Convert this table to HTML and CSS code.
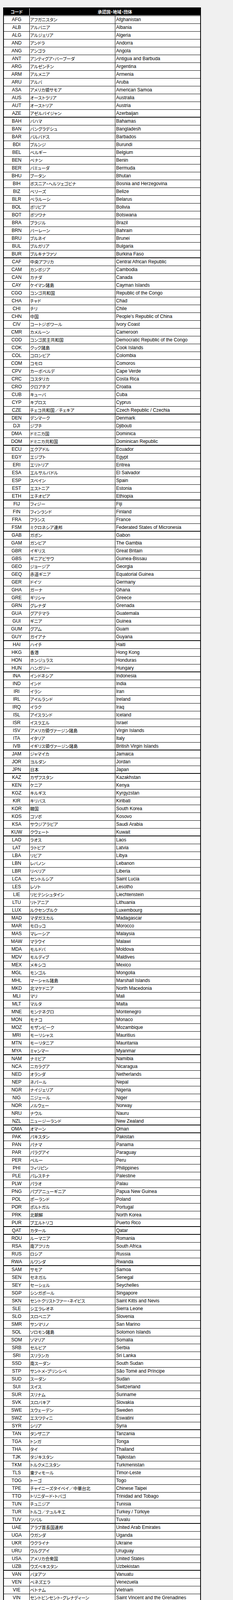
FILE: index.html
```html
<!DOCTYPE html>
<html lang="ja">
<head>
<meta charset="utf-8">
<title>コード一覧</title>
<link rel="stylesheet" href="styles.css">
</head>
<body>
<div class="tbl">
  <div class="hd"><span class="hc">コード</span><span class="hn">承認国・地域・団体</span></div>
  <div class="grp">
    <div class="r"><span class="c">AFG</span><span class="j">アフガニスタン</span><span class="e">Afghanistan</span></div>
    <div class="r"><span class="c">ALB</span><span class="j">アルバニア</span><span class="e">Albania</span></div>
    <div class="r"><span class="c">ALG</span><span class="j">アルジェリア</span><span class="e">Algeria</span></div>
    <div class="r"><span class="c">AND</span><span class="j">アンドラ</span><span class="e">Andorra</span></div>
    <div class="r"><span class="c">ANG</span><span class="j">アンゴラ</span><span class="e">Angola</span></div>
    <div class="r"><span class="c">ANT</span><span class="j">アンティグア・バーブーダ</span><span class="e">Antigua and Barbuda</span></div>
    <div class="r"><span class="c">ARG</span><span class="j">アルゼンチン</span><span class="e">Argentina</span></div>
    <div class="r"><span class="c">ARM</span><span class="j">アルメニア</span><span class="e">Armenia</span></div>
    <div class="r"><span class="c">ARU</span><span class="j">アルバ</span><span class="e">Aruba</span></div>
    <div class="r"><span class="c">ASA</span><span class="j">アメリカ領サモア</span><span class="e">American Samoa</span></div>
    <div class="r"><span class="c">AUS</span><span class="j">オーストラリア</span><span class="e">Australia</span></div>
    <div class="r"><span class="c">AUT</span><span class="j">オーストリア</span><span class="e">Austria</span></div>
    <div class="r"><span class="c">AZE</span><span class="j">アゼルバイジャン</span><span class="e">Azerbaijan</span></div>
  </div>
  <div class="grp">
    <div class="r"><span class="c">BAH</span><span class="j">バハマ</span><span class="e">Bahamas</span></div>
    <div class="r"><span class="c">BAN</span><span class="j">バングラデシュ</span><span class="e">Bangladesh</span></div>
    <div class="r"><span class="c">BAR</span><span class="j">バルバドス</span><span class="e">Barbados</span></div>
    <div class="r"><span class="c">BDI</span><span class="j">ブルンジ</span><span class="e">Burundi</span></div>
    <div class="r"><span class="c">BEL</span><span class="j">ベルギー</span><span class="e">Belgium</span></div>
    <div class="r"><span class="c">BEN</span><span class="j">ベナン</span><span class="e">Benin</span></div>
    <div class="r"><span class="c">BER</span><span class="j">バミューダ</span><span class="e">Bermuda</span></div>
    <div class="r"><span class="c">BHU</span><span class="j">ブータン</span><span class="e">Bhutan</span></div>
    <div class="r"><span class="c">BIH</span><span class="j">ボスニア・ヘルツェゴビナ</span><span class="e">Bosnia and Herzegovina</span></div>
    <div class="r"><span class="c">BIZ</span><span class="j">ベリーズ</span><span class="e">Belize</span></div>
    <div class="r"><span class="c">BLR</span><span class="j">ベラルーシ</span><span class="e">Belarus</span></div>
    <div class="r"><span class="c">BOL</span><span class="j">ボリビア</span><span class="e">Bolivia</span></div>
    <div class="r"><span class="c">BOT</span><span class="j">ボツワナ</span><span class="e">Botswana</span></div>
    <div class="r"><span class="c">BRA</span><span class="j">ブラジル</span><span class="e">Brazil</span></div>
    <div class="r"><span class="c">BRN</span><span class="j">バーレーン</span><span class="e">Bahrain</span></div>
    <div class="r"><span class="c">BRU</span><span class="j">ブルネイ</span><span class="e">Brunei</span></div>
    <div class="r"><span class="c">BUL</span><span class="j">ブルガリア</span><span class="e">Bulgaria</span></div>
    <div class="r"><span class="c">BUR</span><span class="j">ブルキナファソ</span><span class="e">Burkina Faso</span></div>
  </div>
  <div class="grp">
    <div class="r"><span class="c">CAF</span><span class="j">中央アフリカ</span><span class="e">Central African Republic</span></div>
    <div class="r"><span class="c">CAM</span><span class="j">カンボジア</span><span class="e">Cambodia</span></div>
    <div class="r"><span class="c">CAN</span><span class="j">カナダ</span><span class="e">Canada</span></div>
    <div class="r"><span class="c">CAY</span><span class="j">ケイマン諸島</span><span class="e">Cayman Islands</span></div>
    <div class="r"><span class="c">CGO</span><span class="j">コンゴ共和国</span><span class="e">Republic of the Congo</span></div>
    <div class="r"><span class="c">CHA</span><span class="j">チャド</span><span class="e">Chad</span></div>
    <div class="r"><span class="c">CHI</span><span class="j">チリ</span><span class="e">Chile</span></div>
    <div class="r"><span class="c">CHN</span><span class="j">中国</span><span class="e">People's Republic of China</span></div>
    <div class="r"><span class="c">CIV</span><span class="j">コートジボワール</span><span class="e">Ivory Coast</span></div>
    <div class="r"><span class="c">CMR</span><span class="j">カメルーン</span><span class="e">Cameroon</span></div>
    <div class="r"><span class="c">COD</span><span class="j">コンゴ民主共和国</span><span class="e">Democratic Republic of the Congo</span></div>
    <div class="r"><span class="c">COK</span><span class="j">クック諸島</span><span class="e">Cook Islands</span></div>
    <div class="r"><span class="c">COL</span><span class="j">コロンビア</span><span class="e">Colombia</span></div>
    <div class="r"><span class="c">COM</span><span class="j">コモロ</span><span class="e">Comoros</span></div>
    <div class="r"><span class="c">CPV</span><span class="j">カーボベルデ</span><span class="e">Cape Verde</span></div>
    <div class="r"><span class="c">CRC</span><span class="j">コスタリカ</span><span class="e">Costa Rica</span></div>
    <div class="r"><span class="c">CRO</span><span class="j">クロアチア</span><span class="e">Croatia</span></div>
    <div class="r"><span class="c">CUB</span><span class="j">キューバ</span><span class="e">Cuba</span></div>
    <div class="r"><span class="c">CYP</span><span class="j">キプロス</span><span class="e">Cyprus</span></div>
    <div class="r"><span class="c">CZE</span><span class="j">チェコ共和国／チェキア</span><span class="e">Czech Republic / Czechia</span></div>
  </div>
  <div class="grp">
    <div class="r"><span class="c">DEN</span><span class="j">デンマーク</span><span class="e">Denmark</span></div>
    <div class="r"><span class="c">DJI</span><span class="j">ジブチ</span><span class="e">Djibouti</span></div>
    <div class="r"><span class="c">DMA</span><span class="j">ドミニカ国</span><span class="e">Dominica</span></div>
    <div class="r"><span class="c">DOM</span><span class="j">ドミニカ共和国</span><span class="e">Dominican Republic</span></div>
  </div>
  <div class="grp">
    <div class="r"><span class="c">ECU</span><span class="j">エクアドル</span><span class="e">Ecuador</span></div>
    <div class="r"><span class="c">EGY</span><span class="j">エジプト</span><span class="e">Egypt</span></div>
    <div class="r"><span class="c">ERI</span><span class="j">エリトリア</span><span class="e">Eritrea</span></div>
    <div class="r"><span class="c">ESA</span><span class="j">エルサルバドル</span><span class="e">El Salvador</span></div>
    <div class="r"><span class="c">ESP</span><span class="j">スペイン</span><span class="e">Spain</span></div>
    <div class="r"><span class="c">EST</span><span class="j">エストニア</span><span class="e">Estonia</span></div>
    <div class="r"><span class="c">ETH</span><span class="j">エチオピア</span><span class="e">Ethiopia</span></div>
  </div>
  <div class="grp">
    <div class="r"><span class="c">FIJ</span><span class="j">フィジー</span><span class="e">Fiji</span></div>
    <div class="r"><span class="c">FIN</span><span class="j">フィンランド</span><span class="e">Finland</span></div>
    <div class="r"><span class="c">FRA</span><span class="j">フランス</span><span class="e">France</span></div>
    <div class="r"><span class="c">FSM</span><span class="j">ミクロネシア連邦</span><span class="e">Federated States of Micronesia</span></div>
  </div>
  <div class="grp">
    <div class="r"><span class="c">GAB</span><span class="j">ガボン</span><span class="e">Gabon</span></div>
    <div class="r"><span class="c">GAM</span><span class="j">ガンビア</span><span class="e">The Gambia</span></div>
    <div class="r"><span class="c">GBR</span><span class="j">イギリス</span><span class="e">Great Britain</span></div>
    <div class="r"><span class="c">GBS</span><span class="j">ギニアビサウ</span><span class="e">Guinea-Bissau</span></div>
    <div class="r"><span class="c">GEO</span><span class="j">ジョージア</span><span class="e">Georgia</span></div>
    <div class="r"><span class="c">GEQ</span><span class="j">赤道ギニア</span><span class="e">Equatorial Guinea</span></div>
    <div class="r"><span class="c">GER</span><span class="j">ドイツ</span><span class="e">Germany</span></div>
    <div class="r"><span class="c">GHA</span><span class="j">ガーナ</span><span class="e">Ghana</span></div>
    <div class="r"><span class="c">GRE</span><span class="j">ギリシャ</span><span class="e">Greece</span></div>
    <div class="r"><span class="c">GRN</span><span class="j">グレナダ</span><span class="e">Grenada</span></div>
    <div class="r"><span class="c">GUA</span><span class="j">グアテマラ</span><span class="e">Guatemala</span></div>
    <div class="r"><span class="c">GUI</span><span class="j">ギニア</span><span class="e">Guinea</span></div>
    <div class="r"><span class="c">GUM</span><span class="j">グアム</span><span class="e">Guam</span></div>
    <div class="r"><span class="c">GUY</span><span class="j">ガイアナ</span><span class="e">Guyana</span></div>
  </div>
  <div class="grp">
    <div class="r"><span class="c">HAI</span><span class="j">ハイチ</span><span class="e">Haiti</span></div>
    <div class="r"><span class="c">HKG</span><span class="j">香港</span><span class="e">Hong Kong</span></div>
    <div class="r"><span class="c">HON</span><span class="j">ホンジュラス</span><span class="e">Honduras</span></div>
    <div class="r"><span class="c">HUN</span><span class="j">ハンガリー</span><span class="e">Hungary</span></div>
  </div>
  <div class="grp">
    <div class="r"><span class="c">INA</span><span class="j">インドネシア</span><span class="e">Indonesia</span></div>
    <div class="r"><span class="c">IND</span><span class="j">インド</span><span class="e">India</span></div>
    <div class="r"><span class="c">IRI</span><span class="j">イラン</span><span class="e">Iran</span></div>
    <div class="r"><span class="c">IRL</span><span class="j">アイルランド</span><span class="e">Ireland</span></div>
    <div class="r"><span class="c">IRQ</span><span class="j">イラク</span><span class="e">Iraq</span></div>
    <div class="r"><span class="c">ISL</span><span class="j">アイスランド</span><span class="e">Iceland</span></div>
    <div class="r"><span class="c">ISR</span><span class="j">イスラエル</span><span class="e">Israel</span></div>
    <div class="r"><span class="c">ISV</span><span class="j">アメリカ領ヴァージン諸島</span><span class="e">Virgin Islands</span></div>
    <div class="r"><span class="c">ITA</span><span class="j">イタリア</span><span class="e">Italy</span></div>
    <div class="r"><span class="c">IVB</span><span class="j">イギリス領ヴァージン諸島</span><span class="e">British Virgin Islands</span></div>
  </div>
  <div class="grp">
    <div class="r"><span class="c">JAM</span><span class="j">ジャマイカ</span><span class="e">Jamaica</span></div>
    <div class="r"><span class="c">JOR</span><span class="j">ヨルダン</span><span class="e">Jordan</span></div>
    <div class="r"><span class="c">JPN</span><span class="j">日本</span><span class="e">Japan</span></div>
  </div>
  <div class="grp">
    <div class="r"><span class="c">KAZ</span><span class="j">カザフスタン</span><span class="e">Kazakhstan</span></div>
    <div class="r"><span class="c">KEN</span><span class="j">ケニア</span><span class="e">Kenya</span></div>
    <div class="r"><span class="c">KGZ</span><span class="j">キルギス</span><span class="e">Kyrgyzstan</span></div>
    <div class="r"><span class="c">KIR</span><span class="j">キリバス</span><span class="e">Kiribati</span></div>
    <div class="r"><span class="c">KOR</span><span class="j">韓国</span><span class="e">South Korea</span></div>
    <div class="r"><span class="c">KOS</span><span class="j">コソボ</span><span class="e">Kosovo</span></div>
    <div class="r"><span class="c">KSA</span><span class="j">サウジアラビア</span><span class="e">Saudi Arabia</span></div>
    <div class="r"><span class="c">KUW</span><span class="j">クウェート</span><span class="e">Kuwait</span></div>
  </div>
  <div class="grp">
    <div class="r"><span class="c">LAO</span><span class="j">ラオス</span><span class="e">Laos</span></div>
    <div class="r"><span class="c">LAT</span><span class="j">ラトビア</span><span class="e">Latvia</span></div>
    <div class="r"><span class="c">LBA</span><span class="j">リビア</span><span class="e">Libya</span></div>
    <div class="r"><span class="c">LBN</span><span class="j">レバノン</span><span class="e">Lebanon</span></div>
    <div class="r"><span class="c">LBR</span><span class="j">リベリア</span><span class="e">Liberia</span></div>
    <div class="r"><span class="c">LCA</span><span class="j">セントルシア</span><span class="e">Saint Lucia</span></div>
    <div class="r"><span class="c">LES</span><span class="j">レソト</span><span class="e">Lesotho</span></div>
    <div class="r"><span class="c">LIE</span><span class="j">リヒテンシュタイン</span><span class="e">Liechtenstein</span></div>
    <div class="r"><span class="c">LTU</span><span class="j">リトアニア</span><span class="e">Lithuania</span></div>
    <div class="r"><span class="c">LUX</span><span class="j">ルクセンブルク</span><span class="e">Luxembourg</span></div>
  </div>
  <div class="grp">
    <div class="r"><span class="c">MAD</span><span class="j">マダガスカル</span><span class="e">Madagascar</span></div>
    <div class="r"><span class="c">MAR</span><span class="j">モロッコ</span><span class="e">Morocco</span></div>
    <div class="r"><span class="c">MAS</span><span class="j">マレーシア</span><span class="e">Malaysia</span></div>
    <div class="r"><span class="c">MAW</span><span class="j">マラウイ</span><span class="e">Malawi</span></div>
    <div class="r"><span class="c">MDA</span><span class="j">モルドバ</span><span class="e">Moldova</span></div>
    <div class="r"><span class="c">MDV</span><span class="j">モルディブ</span><span class="e">Maldives</span></div>
    <div class="r"><span class="c">MEX</span><span class="j">メキシコ</span><span class="e">Mexico</span></div>
    <div class="r"><span class="c">MGL</span><span class="j">モンゴル</span><span class="e">Mongolia</span></div>
    <div class="r"><span class="c">MHL</span><span class="j">マーシャル諸島</span><span class="e">Marshall Islands</span></div>
    <div class="r"><span class="c">MKD</span><span class="j">北マケドニア</span><span class="e">North Macedonia</span></div>
    <div class="r"><span class="c">MLI</span><span class="j">マリ</span><span class="e">Mali</span></div>
    <div class="r"><span class="c">MLT</span><span class="j">マルタ</span><span class="e">Malta</span></div>
    <div class="r"><span class="c">MNE</span><span class="j">モンテネグロ</span><span class="e">Montenegro</span></div>
    <div class="r"><span class="c">MON</span><span class="j">モナコ</span><span class="e">Monaco</span></div>
    <div class="r"><span class="c">MOZ</span><span class="j">モザンビーク</span><span class="e">Mozambique</span></div>
    <div class="r"><span class="c">MRI</span><span class="j">モーリシャス</span><span class="e">Mauritius</span></div>
    <div class="r"><span class="c">MTN</span><span class="j">モーリタニア</span><span class="e">Mauritania</span></div>
    <div class="r"><span class="c">MYA</span><span class="j">ミャンマー</span><span class="e">Myanmar</span></div>
  </div>
  <div class="grp">
    <div class="r"><span class="c">NAM</span><span class="j">ナミビア</span><span class="e">Namibia</span></div>
    <div class="r"><span class="c">NCA</span><span class="j">ニカラグア</span><span class="e">Nicaragua</span></div>
    <div class="r"><span class="c">NED</span><span class="j">オランダ</span><span class="e">Netherlands</span></div>
    <div class="r"><span class="c">NEP</span><span class="j">ネパール</span><span class="e">Nepal</span></div>
    <div class="r"><span class="c">NGR</span><span class="j">ナイジェリア</span><span class="e">Nigeria</span></div>
    <div class="r"><span class="c">NIG</span><span class="j">ニジェール</span><span class="e">Niger</span></div>
    <div class="r"><span class="c">NOR</span><span class="j">ノルウェー</span><span class="e">Norway</span></div>
    <div class="r"><span class="c">NRU</span><span class="j">ナウル</span><span class="e">Nauru</span></div>
    <div class="r"><span class="c">NZL</span><span class="j">ニュージーランド</span><span class="e">New Zealand</span></div>
  </div>
  <div class="grp">
    <div class="r"><span class="c">OMA</span><span class="j">オマーン</span><span class="e">Oman</span></div>
  </div>
  <div class="grp">
    <div class="r"><span class="c">PAK</span><span class="j">パキスタン</span><span class="e">Pakistan</span></div>
    <div class="r"><span class="c">PAN</span><span class="j">パナマ</span><span class="e">Panama</span></div>
    <div class="r"><span class="c">PAR</span><span class="j">パラグアイ</span><span class="e">Paraguay</span></div>
    <div class="r"><span class="c">PER</span><span class="j">ペルー</span><span class="e">Peru</span></div>
    <div class="r"><span class="c">PHI</span><span class="j">フィリピン</span><span class="e">Philippines</span></div>
    <div class="r"><span class="c">PLE</span><span class="j">パレスチナ</span><span class="e">Palestine</span></div>
    <div class="r"><span class="c">PLW</span><span class="j">パラオ</span><span class="e">Palau</span></div>
    <div class="r"><span class="c">PNG</span><span class="j">パプアニューギニア</span><span class="e">Papua New Guinea</span></div>
    <div class="r"><span class="c">POL</span><span class="j">ポーランド</span><span class="e">Poland</span></div>
    <div class="r"><span class="c">POR</span><span class="j">ポルトガル</span><span class="e">Portugal</span></div>
    <div class="r"><span class="c">PRK</span><span class="j">北朝鮮</span><span class="e">North Korea</span></div>
    <div class="r"><span class="c">PUR</span><span class="j">プエルトリコ</span><span class="e">Puerto Rico</span></div>
  </div>
  <div class="grp">
    <div class="r"><span class="c">QAT</span><span class="j">カタール</span><span class="e">Qatar</span></div>
  </div>
  <div class="grp">
    <div class="r"><span class="c">ROU</span><span class="j">ルーマニア</span><span class="e">Romania</span></div>
    <div class="r"><span class="c">RSA</span><span class="j">南アフリカ</span><span class="e">South Africa</span></div>
    <div class="r"><span class="c">RUS</span><span class="j">ロシア</span><span class="e">Russia</span></div>
    <div class="r"><span class="c">RWA</span><span class="j">ルワンダ</span><span class="e">Rwanda</span></div>
  </div>
  <div class="grp">
    <div class="r"><span class="c">SAM</span><span class="j">サモア</span><span class="e">Samoa</span></div>
    <div class="r"><span class="c">SEN</span><span class="j">セネガル</span><span class="e">Senegal</span></div>
    <div class="r"><span class="c">SEY</span><span class="j">セーシェル</span><span class="e">Seychelles</span></div>
    <div class="r"><span class="c">SGP</span><span class="j">シンガポール</span><span class="e">Singapore</span></div>
    <div class="r"><span class="c">SKN</span><span class="j">セントクリストファー・ネイビス</span><span class="e">Saint Kitts and Nevis</span></div>
    <div class="r"><span class="c">SLE</span><span class="j">シエラレオネ</span><span class="e">Sierra Leone</span></div>
    <div class="r"><span class="c">SLO</span><span class="j">スロベニア</span><span class="e">Slovenia</span></div>
    <div class="r"><span class="c">SMR</span><span class="j">サンマリノ</span><span class="e">San Marino</span></div>
    <div class="r"><span class="c">SOL</span><span class="j">ソロモン諸島</span><span class="e">Solomon Islands</span></div>
    <div class="r"><span class="c">SOM</span><span class="j">ソマリア</span><span class="e">Somalia</span></div>
    <div class="r"><span class="c">SRB</span><span class="j">セルビア</span><span class="e">Serbia</span></div>
    <div class="r"><span class="c">SRI</span><span class="j">スリランカ</span><span class="e">Sri Lanka</span></div>
    <div class="r"><span class="c">SSD</span><span class="j">南スーダン</span><span class="e">South Sudan</span></div>
    <div class="r"><span class="c">STP</span><span class="j">サントメ・プリンシペ</span><span class="e">São Tomé and Príncipe</span></div>
    <div class="r"><span class="c">SUD</span><span class="j">スーダン</span><span class="e">Sudan</span></div>
    <div class="r"><span class="c">SUI</span><span class="j">スイス</span><span class="e">Switzerland</span></div>
    <div class="r"><span class="c">SUR</span><span class="j">スリナム</span><span class="e">Suriname</span></div>
    <div class="r"><span class="c">SVK</span><span class="j">スロバキア</span><span class="e">Slovakia</span></div>
    <div class="r"><span class="c">SWE</span><span class="j">スウェーデン</span><span class="e">Sweden</span></div>
    <div class="r"><span class="c">SWZ</span><span class="j">エスワティニ</span><span class="e">Eswatini</span></div>
    <div class="r"><span class="c">SYR</span><span class="j">シリア</span><span class="e">Syria</span></div>
  </div>
  <div class="grp">
    <div class="r"><span class="c">TAN</span><span class="j">タンザニア</span><span class="e">Tanzania</span></div>
    <div class="r"><span class="c">TGA</span><span class="j">トンガ</span><span class="e">Tonga</span></div>
    <div class="r"><span class="c">THA</span><span class="j">タイ</span><span class="e">Thailand</span></div>
    <div class="r"><span class="c">TJK</span><span class="j">タジキスタン</span><span class="e">Tajikistan</span></div>
    <div class="r"><span class="c">TKM</span><span class="j">トルクメニスタン</span><span class="e">Turkmenistan</span></div>
    <div class="r"><span class="c">TLS</span><span class="j">東ティモール</span><span class="e">Timor-Leste</span></div>
    <div class="r"><span class="c">TOG</span><span class="j">トーゴ</span><span class="e">Togo</span></div>
    <div class="r"><span class="c">TPE</span><span class="j">チャイニーズタイペイ／中華台北</span><span class="e">Chinese Taipei</span></div>
    <div class="r"><span class="c">TTO</span><span class="j">トリニダード・トバゴ</span><span class="e">Trinidad and Tobago</span></div>
    <div class="r"><span class="c">TUN</span><span class="j">チュニジア</span><span class="e">Tunisia</span></div>
    <div class="r"><span class="c">TUR</span><span class="j">トルコ／テュルキエ</span><span class="e">Turkey / Türkiye</span></div>
    <div class="r"><span class="c">TUV</span><span class="j">ツバル</span><span class="e">Tuvalu</span></div>
  </div>
  <div class="grp">
    <div class="r"><span class="c">UAE</span><span class="j">アラブ首長国連邦</span><span class="e">United Arab Emirates</span></div>
    <div class="r"><span class="c">UGA</span><span class="j">ウガンダ</span><span class="e">Uganda</span></div>
    <div class="r"><span class="c">UKR</span><span class="j">ウクライナ</span><span class="e">Ukraine</span></div>
    <div class="r"><span class="c">URU</span><span class="j">ウルグアイ</span><span class="e">Uruguay</span></div>
    <div class="r"><span class="c">USA</span><span class="j">アメリカ合衆国</span><span class="e">United States</span></div>
    <div class="r"><span class="c">UZB</span><span class="j">ウズベキスタン</span><span class="e">Uzbekistan</span></div>
  </div>
  <div class="grp">
    <div class="r"><span class="c">VAN</span><span class="j">バヌアツ</span><span class="e">Vanuatu</span></div>
    <div class="r"><span class="c">VEN</span><span class="j">ベネズエラ</span><span class="e">Venezuela</span></div>
    <div class="r"><span class="c">VIE</span><span class="j">ベトナム</span><span class="e">Vietnam</span></div>
    <div class="r"><span class="c">VIN</span><span class="j">セントビンセント・グレナディーン</span><span class="e">Saint Vincent and the Grenadines</span></div>
  </div>
  <div class="grp">
    <div class="r"><span class="c">YEM</span><span class="j">イエメン</span><span class="e">Yemen</span></div>
  </div>
  <div class="grp">
    <div class="r"><span class="c">ZAM</span><span class="j">ザンビア</span><span class="e">Zambia</span></div>
    <div class="r"><span class="c">ZIM</span><span class="j">ジンバブエ</span><span class="e">Zimbabwe</span></div>
  </div>
</div>
</body>
</html>
```

FILE: styles.css
```css
html {
  background: #f0f0f0;
}

body {
  margin: 0;
  padding: 19px 0 20px 8px;
  color: #000;
  font-size: 12px;
  line-height: 1;
}

.tbl {
  width: 506px;
  box-sizing: border-box;
  border: 2px solid #000;
  border-bottom-width: 1px;
  background: #fff;
}

.hd {
  display: flex;
  height: 19px;
  box-sizing: border-box;
  background: #000;
  border-bottom: 1px solid #fff;
  color: #fff;
  font: bold 11px/18px "Noto Sans CJK JP", sans-serif;
  font-feature-settings: "palt";
  text-align: center;
  overflow: hidden;
}

.hc {
  flex: 0 0 65px;
}

.hn {
  flex: 1 1 auto;
  border-left: 1px solid #fff;
}

.grp {
  border-bottom: 1px solid #000;
}

.r {
  display: flex;
  height: 20px;
  box-sizing: border-box;
  border-top: 1px solid #000;
  line-height: 19px;
  white-space: nowrap;
  overflow: hidden;
}

.grp > .r:last-child {
  height: 19px;
  line-height: 18px;
}

.c,
.e {
  font-family: "Liberation Sans", Arial, sans-serif;
  font-size: 12px;
}

.c {
  flex: 0 0 65px;
  text-align: center;
}

.j {
  flex: 0 0 219px;
  box-sizing: border-box;
  border-left: 1px solid #000;
  padding-left: 1px;
  font-family: "Noto Sans CJK JP", sans-serif;
  font-size: 11px;
  font-feature-settings: "palt";
  overflow: hidden;
}

.e {
  flex: 0 0 218px;
  box-sizing: border-box;
  border-left: 1px solid #000;
  padding-left: 2px;
  overflow: hidden;
}
```
